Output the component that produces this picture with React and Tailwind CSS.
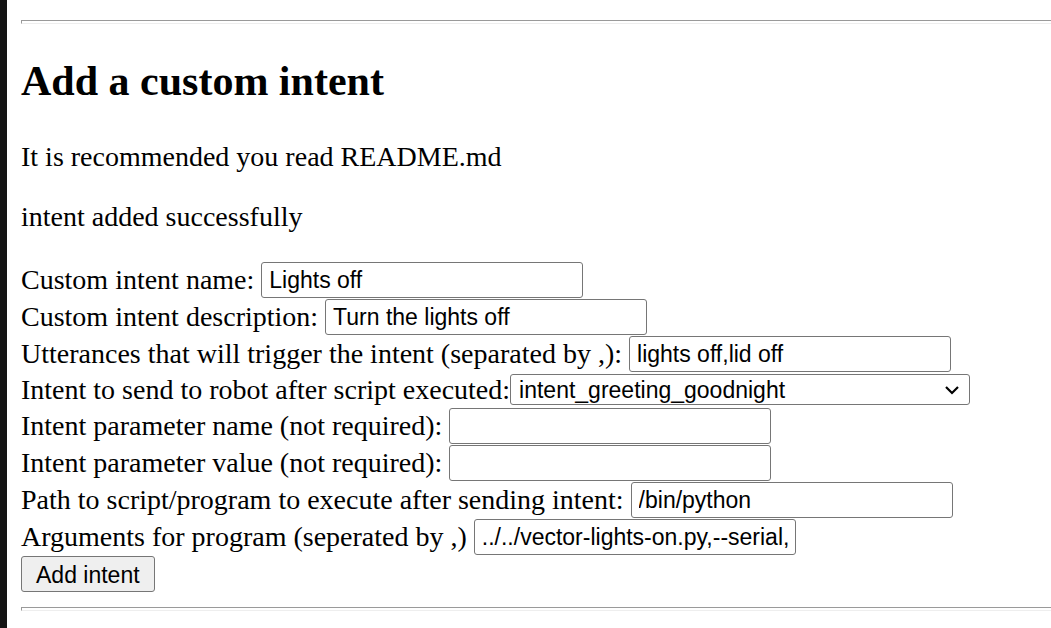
import React from 'react';

const serif = "font-['Liberation_Serif',serif]";
const sans = "font-['Liberation_Sans',Arial,sans-serif]";

const Field = ({ label, value, width = 'w-[322px]', space = true }) => (
  <div className="flex items-center h-[37px]">
    <span className="whitespace-pre">{label}{space ? ' ' : ''}</span>
    <input
      readOnly
      value={value}
      className={`${sans} ${width} h-[36px] border border-[#767676] rounded-[3px] px-[7px] pt-[2px] text-[23px] text-black bg-white outline-none`}
    />
  </div>
);

const Divider = ({ className = '' }) => (
  <div className={`h-[4px] border-t border-t-[#9a9a9a] border-b border-b-[#eeeeee] border-l border-l-[#9a9a9a] ${className}`} />
);

export default function App() {
  return (
    <div className={`flex min-h-[628px] bg-white text-black ${serif}`}>
      <div className="w-[7px] shrink-0 bg-[#141414]" />
      <div className="flex-1 pl-[14px] pt-[20px]">
        <Divider />
        <h1 className="mt-[33px] text-[42px] leading-[48px] font-bold">Add a custom intent</h1>
        <p className="mt-[36px] text-[28px] leading-[32px]">It is recommended you read README.md</p>
        <p className="mt-[28px] text-[28px] leading-[32px]">intent added successfully</p>

        <form className="mt-[28px] text-[28px] leading-[32px]">
          <Field label="Custom intent name:" value="Lights off" />
          <Field label="Custom intent description:" value="Turn the lights off" />
          <Field label="Utterances that will trigger the intent (separated by ,):" value="lights off,lid off" />
          <div className="flex items-center h-[35px]">
            <span>Intent to send to robot after script executed:</span>
            <div className={`${sans} relative flex items-center w-[460px] h-[31px] border border-[#767676] rounded-[3px] pl-[8px] pt-[1px] text-[23px]`}>
              <span>intent_greeting_goodnight</span>
              <svg className="absolute right-[9px] top-[9px]" width="16" height="12" viewBox="0 0 16 12" fill="none">
                <polyline points="2,3 8,9 14,3" stroke="black" strokeWidth="2.2" />
              </svg>
            </div>
          </div>
          <Field label="Intent parameter name (not required):" value="" />
          <Field label="Intent parameter value (not required):" value="" />
          <Field label="Path to script/program to execute after sending intent:" value="/bin/python" />
          <Field label="Arguments for program (seperated by ,)" value="../../vector-lights-on.py,--serial,00e20115" />
          <button
            type="button"
            className={`${sans} mt-[1px] h-[36px] px-[14px] pt-[1px] border border-[#767676] rounded-[3px] bg-[#efefef] text-[23px]`}
          >
            Add intent
          </button>
        </form>
        <Divider className="mt-[15px]" />
      </div>
    </div>
  );
}
